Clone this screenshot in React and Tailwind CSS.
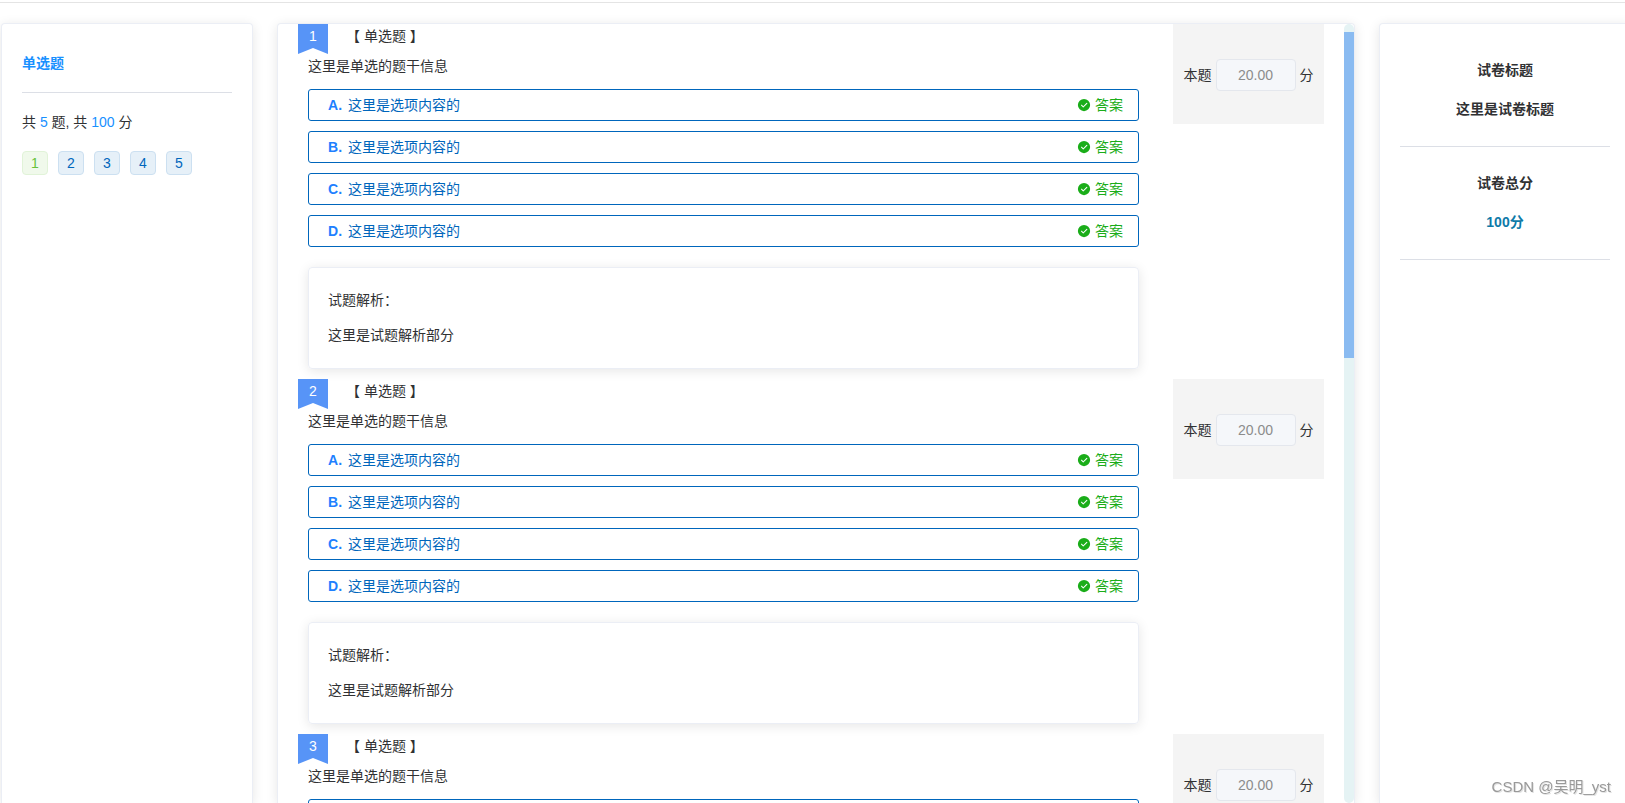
import { useState } from 'react'

const QUESTIONS = [1, 2, 3, 4, 5].map(no => ({
  no,
  type: '单选题',
  stem: '这里是单选的题干信息',
  score: '20.00',
  options: ['A', 'B', 'C', 'D'].map(k => ({ key: k, text: '这里是选项内容的' })),
  analysis: '这里是试题解析部分',
}))

function CheckIcon() {
  return (
    <svg viewBox="0 0 1024 1024" className="w-3.5 h-3.5" fill="currentColor" aria-hidden="true">
      <path d="M512 64a448 448 0 1 1 0 896 448 448 0 0 1 0-896zm-55.8 536.4-99.5-99.5a38.4 38.4 0 1 0-54.3 54.3l126.7 126.7a38.3 38.3 0 0 0 54.3 0l262.4-262.5a38.4 38.4 0 1 0-54.3-54.3L456.2 600.4z"/>
    </svg>
  )
}

function Option({ item }) {
  return (
    <li className="flex items-center h-8 pl-[19px] pr-[15px] rounded-[3px] border border-[#0066bc] text-[#0066bc]">
      <b className="w-5 text-[#1e80ff]">{item.key}.</b>
      <span className="flex-1">{item.text}</span>
      <span className="flex items-center gap-1 text-[#1aad19]"><CheckIcon/>答案</span>
    </li>
  )
}

function Question({ q }) {
  const id = `score-${q.no}`
  return (
    <section id={`question-${q.no}`} className="grid grid-cols-[minmax(0,1fr)_151px] gap-[34px] items-start pb-2.5">
      <div>
        <div className="flex items-start h-[30px]">
          <span className="w-[30px] h-[30px] leading-6 text-center text-white bg-[#5794f7] [clip-path:polygon(0_0,100%_0,100%_100%,50%_80%,0_100%)]">{q.no}</span>
          <h3 className="ml-[18px] leading-6">【 {q.type} 】</h3>
        </div>
        <div className="pl-2.5">
          <p className="leading-6">{q.stem}</p>
          <ul className="flex flex-col gap-2.5 mt-[11px]">
            {q.options.map(o => <Option key={o.key} item={o}/>)}
          </ul>
          <div className="mt-5 px-[19px] pt-5 pb-[21px] rounded border border-[#ebeef5] shadow-[0_2px_12px_rgba(0,0,0,0.1)]">
            <p className="leading-6">试题解析：</p>
            <p className="leading-6 mt-[11px]">{q.analysis}</p>
          </div>
        </div>
      </div>
      <div className="flex items-center justify-center gap-1 h-[100px] pt-0.5 bg-[#f4f4f4]">
        <label htmlFor={id}>本题</label>
        <input id={id} disabled defaultValue={q.score}
          className="w-20 h-8 rounded border border-[#e4e7ed] bg-[#f5f7fa] text-center text-[#8c8c8c]"/>
        <span>分</span>
      </div>
    </section>
  )
}

export default function App() {
  const [current, setCurrent] = useState(1)

  return (
    <div className="h-screen overflow-hidden flex flex-col pt-0.5 bg-white text-sm text-[#303133] font-['Liberation_Sans','Noto_Sans_CJK_SC',sans-serif]">
      <div className="border-t border-[#e4e4e4] shrink-0"/>
      <main className="flex-1 min-h-0 grid grid-cols-[252px_minmax(0,1fr)_252px] gap-6 pt-5 pl-px -mr-1.5">
        {/* 题号导航 */}
        <aside className="p-5 rounded-t border border-b-0 border-[#ebeef5] bg-white shadow-[0_2px_12px_rgba(0,0,0,0.1)]">
          <h2 className="mt-[7px] leading-6 font-bold text-[#1890ff]">单选题</h2>
          <hr className="my-[17px] border-[#dcdfe6]"/>
          <p className="leading-6">共 <span className="text-[#1890ff]">5</span> 题, 共 <span className="text-[#1890ff]">100</span> 分</p>
          <div className="flex gap-2.5 mt-[17px]">
            {QUESTIONS.map(q => (
              <button key={q.no} onClick={() => setCurrent(q.no)}
                className={`w-[26px] h-6 rounded border ${q.no === current ? 'bg-[#f0f9eb] border-[#e1f3d8] text-[#67c23a]' : 'bg-[#e6f0f8] border-[#cce0f1] text-[#0066bc]'}`}>
                {q.no}
              </button>
            ))}
          </div>
        </aside>

        {/* 题目列表 */}
        <div className="flex min-h-0 rounded-t border border-b-0 border-[#ebeef5] bg-white shadow-[0_2px_12px_rgba(0,0,0,0.1)]">
          <div className="flex-1 min-w-0 overflow-y-auto [scrollbar-width:none] px-5">
            {QUESTIONS.map(q => <Question key={q.no} q={q}/>)}
          </div>
          <div className="w-2.5 pt-2 rounded-full bg-[#e5f3f4]">
            <div className="h-[326px] bg-[#8abbf1]"/>
          </div>
        </div>

        {/* 试卷信息 */}
        <aside className="p-5 rounded-t border border-b-0 border-[#ebeef5] bg-white text-center font-bold shadow-[0_2px_12px_rgba(0,0,0,0.1)]">
          <h2 className="mt-3.5 leading-6">试卷标题</h2>
          <p className="mt-[15px] leading-6">这里是试卷标题</p>
          <hr className="mt-[25px] mb-6 border-[#dcdfe6]"/>
          <h2 className="leading-6">试卷总分</h2>
          <p className="mt-[15px] leading-6 text-[#0e7aa8]">100分</p>
          <hr className="mt-[25px] mb-6 border-[#dcdfe6]"/>
        </aside>
      </main>
      <span className="fixed right-3.5 bottom-1 text-[15px] leading-6 text-[#999999] [text-shadow:1px_1px_0_#e4e4e4]">CSDN @吴明_yst</span>
    </div>
  )
}
